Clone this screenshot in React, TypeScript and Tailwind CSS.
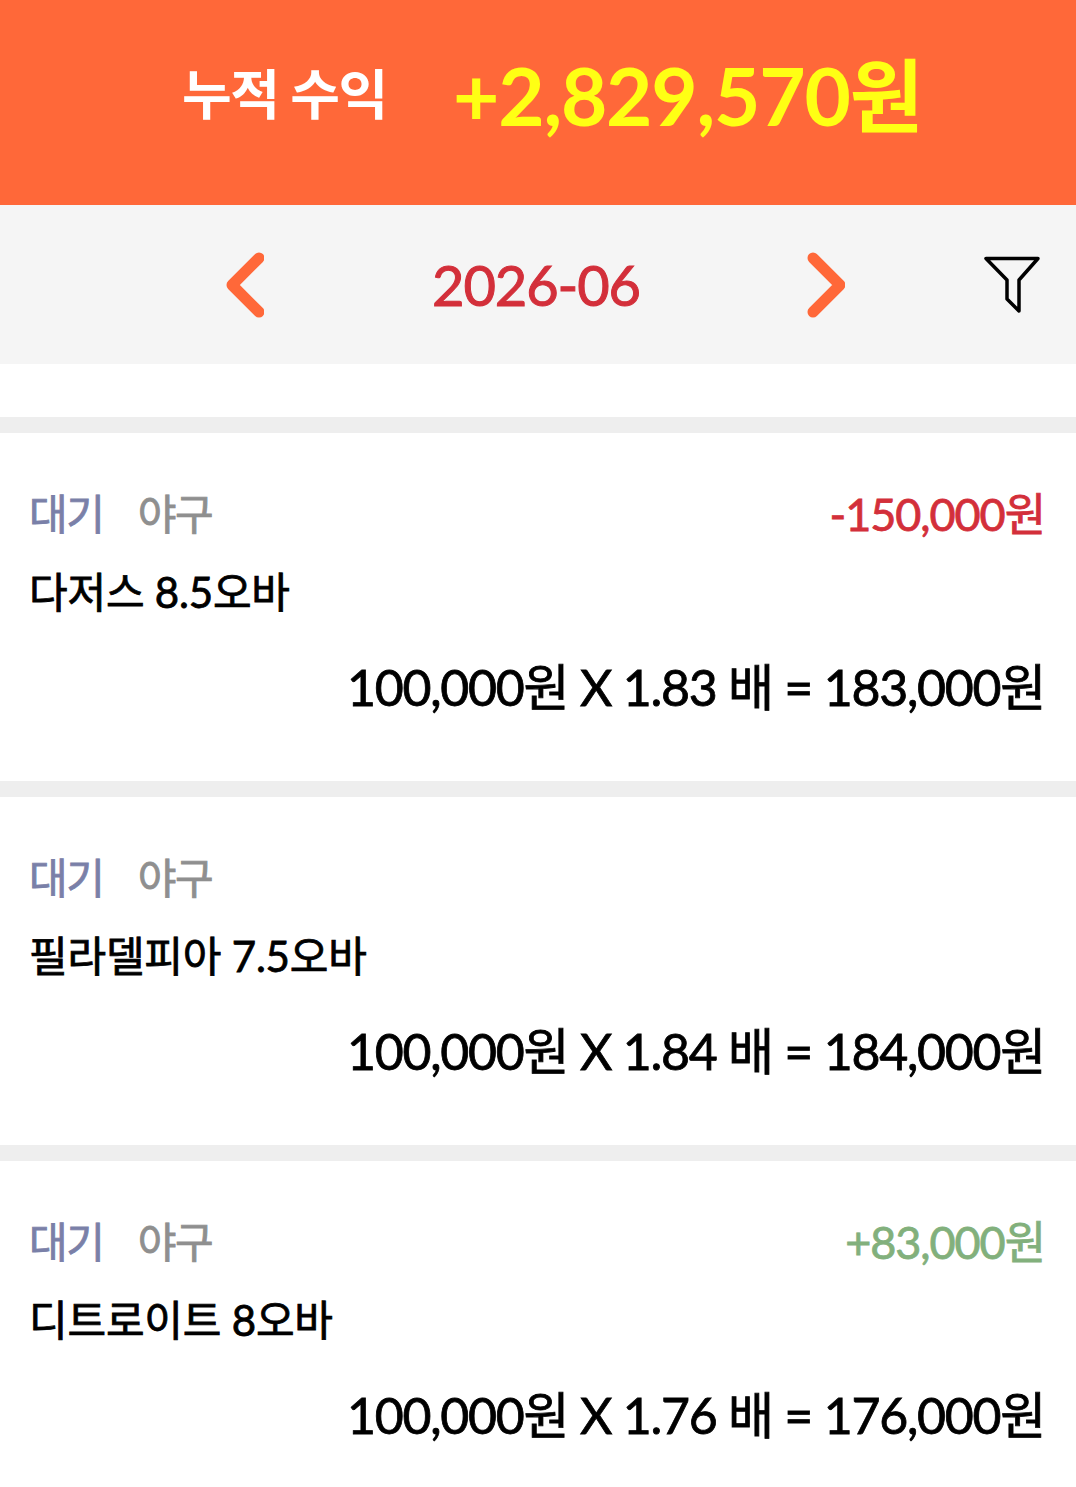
const font = "font-['Lato','Noto_Sans_CJK_KR',sans-serif]";

function Card({ name, odds, total, result, resultColor, last }: { name: string; odds: string; total: string; result?: string; resultColor?: string; last?: boolean }) {
  return (
    <div className={`pl-[29px] pr-[31px] pt-[56px] ${last ? 'h-[326px]' : 'h-[348px]'}`}>
      <div className="flex h-[50px] items-center justify-between">
        <div className="flex gap-[34px] text-[42px] leading-[50px] tracking-[-1.3px] [-webkit-text-stroke:0.8px]">
          <span className="text-[#7a80a8]">대기</span>
          <span className="text-[#8f8f8f]">야구</span>
        </div>
        {result && <span className={`text-[45px] leading-[50px] tracking-[-1.05px] [-webkit-text-stroke:0.8px] ${resultColor}`}>{result}</span>}
      </div>
      <div className="mt-[28px] h-[50px] text-[42px] leading-[50px] tracking-[-0.2px] text-black [-webkit-text-stroke:0.8px]">{name}</div>
      <div className="mt-[45px] h-[50px] text-right text-[50px] leading-[50px] tracking-[-1.25px] text-black [-webkit-text-stroke:0.8px]">
        {odds} = {total}
      </div>
    </div>
  );
}

export default function App() {
  return (
    <div className={`w-[1076px] h-[1487px] overflow-hidden bg-white ${font}`}>
      <header className="flex h-[205px] items-center bg-[#ff6839] pb-[15px] pl-[182px]">
        <span className="w-[271px] text-[54px] font-bold leading-none tracking-[-1.4px] text-white">누적 수익</span>
        <span className="text-[80px] font-bold leading-none tracking-[-1.2px] text-[#ffff14]">+2,829,570원</span>
      </header>
      <nav className="relative flex h-[159px] items-center bg-[#f5f5f5] pl-[226px]">
        <svg width="38" height="66" viewBox="0 0 38 66" fill="none">
          <path d="M33 6 L6 33 L33 60" stroke="#ff6839" strokeWidth="11" strokeLinecap="round" strokeLinejoin="round" />
        </svg>
        <span className="ml-[168px] w-[208px] text-center text-[56px] leading-none tracking-[-1.1px] text-[#d32f3a] [-webkit-text-stroke:1px]">2026-06</span>
        <svg className="ml-[167px]" width="38" height="66" viewBox="0 0 38 66" fill="none">
          <path d="M6 6 L33 33 L6 60" stroke="#ff6839" strokeWidth="11" strokeLinecap="round" strokeLinejoin="round" />
        </svg>
        <svg className="ml-[139px]" width="56" height="58" viewBox="0 0 56 58" fill="none">
          <path d="M2 2.5 H54 L35 24 V55 L23 43 V24 Z" stroke="#000" strokeWidth="3.5" strokeLinejoin="round" />
        </svg>
      </nav>
      <div className="h-[53px]" />
      <div className="h-4 bg-[#eeeeee]" />
      <Card name="다저스 8.5오바" odds="100,000원 X 1.83 배" total="183,000원" result="-150,000원" resultColor="text-[#d32f3a]" />
      <div className="h-4 bg-[#eeeeee]" />
      <Card name="필라델피아 7.5오바" odds="100,000원 X 1.84 배" total="184,000원" />
      <div className="h-4 bg-[#eeeeee]" />
      <Card name="디트로이트 8오바" odds="100,000원 X 1.76 배" total="176,000원" result="+83,000원" resultColor="text-[#82b07c]" last />
    </div>
  );
}
